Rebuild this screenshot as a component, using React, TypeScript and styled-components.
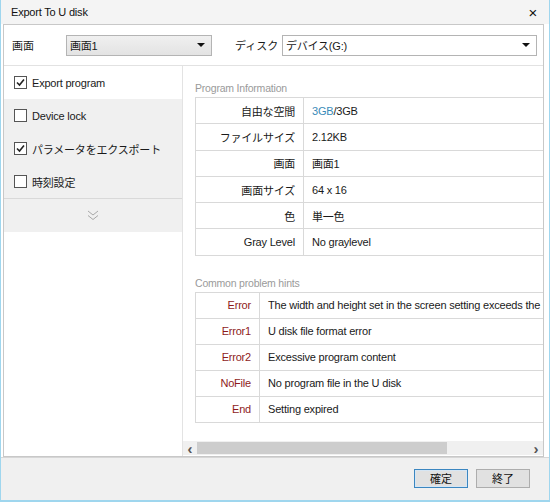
import styled, { createGlobalStyle } from 'styled-components';

const FONT = '"Liberation Sans", "Noto Sans CJK JP", sans-serif';

const GlobalStyle = createGlobalStyle`
  html, body {
    margin: 0;
    padding: 0;
    background: #ffffff;
  }
  body {
    font-family: ${FONT};
    font-size: 11px;
    letter-spacing: -0.2px;
    color: #1a1a1a;
  }
`;

const infoRows = [
  { label: '自由な空間', value: 'free' },
  { label: 'ファイルサイズ', value: '2.12KB' },
  { label: '画面', value: '画面1' },
  { label: '画面サイズ', value: '64 x 16' },
  { label: '色', value: '単一色' },
  { label: 'Gray Level', value: 'No graylevel' },
];

const hintRows = [
  { code: 'Error', text: 'The width and height set in the screen setting exceeds the controller range' },
  { code: 'Error1', text: 'U disk file format error' },
  { code: 'Error2', text: 'Excessive program content' },
  { code: 'NoFile', text: 'No program file in the U disk' },
  { code: 'End', text: 'Setting expired' },
];

const options = [
  { label: 'Export program', checked: true },
  { label: 'Device lock', checked: false },
  { label: 'パラメータをエクスポート', checked: true },
  { label: '時刻設定', checked: false },
];

export default function App() {
  return (
    <>
      <GlobalStyle />
      <Window>
        <TitleBar>
          <span>Export To U disk</span>
          <Close>×</Close>
        </TitleBar>
        <Body>
          <Panel>
            <TopRow>
              <FieldLabel $width={54}>画面</FieldLabel>
              <Combo $width={146} $gray>
                <span>画面1</span>
                <Arrow />
              </Combo>
              <FieldLabel $width={47} $ml={23}>
                ディスク
              </FieldLabel>
              <Combo $width={255}>
                <span>デバイス(G:)</span>
                <Arrow />
              </Combo>
            </TopRow>
            <Main>
              <Sidebar>
                {options.map((o, i) => (
                  <OptionRow key={o.label} $shaded={i > 0}>
                    <CheckBox>
                      {o.checked && (
                        <svg width="9" height="9" viewBox="0 0 9 9">
                          <path d="M1 4.5 L3.5 7 L8 1.5" fill="none" stroke="#222" strokeWidth="1.6" />
                        </svg>
                      )}
                    </CheckBox>
                    <span>{o.label}</span>
                  </OptionRow>
                ))}
                <MoreRow>
                  <svg width="12" height="11" viewBox="0 0 12 11">
                    <path d="M1 1 L6 5 L11 1 M1 5.5 L6 9.5 L11 5.5" fill="none" stroke="#a8a8a8" strokeWidth="1" />
                  </svg>
                </MoreRow>
              </Sidebar>
              <RightPane>
                <Viewport>
                  <Content>
                    <SectionTitle>Program Information</SectionTitle>
                    <Table>
                      <tbody>
                        {infoRows.map((r) => (
                          <Row key={r.label} $h={26.3}>
                            <LabelCell $width={99}>{r.label}</LabelCell>
                            <ValueCell>
                              {r.value === 'free' ? (
                                <>
                                  <Accent>3GB</Accent>/3GB
                                </>
                              ) : (
                                r.value
                              )}
                            </ValueCell>
                          </Row>
                        ))}
                      </tbody>
                    </Table>
                    <SectionTitle $mt={21}>Common problem hints</SectionTitle>
                    <Table>
                      <tbody>
                        {hintRows.map((r) => (
                          <Row key={r.code} $h={26}>
                            <LabelCell $width={55} $red>
                              {r.code}
                            </LabelCell>
                            <ValueCell>{r.text}</ValueCell>
                          </Row>
                        ))}
                      </tbody>
                    </Table>
                  </Content>
                </Viewport>
                <HScroll>
                  <ScrollArrow>‹</ScrollArrow>
                  <Track>
                    <Thumb />
                  </Track>
                  <ScrollArrow>›</ScrollArrow>
                </HScroll>
              </RightPane>
            </Main>
          </Panel>
        </Body>
        <Footer>
          <Button $primary>確定</Button>
          <Button>終了</Button>
        </Footer>
      </Window>
    </>
  );
}

const Window = styled.div`
  width: 550px;
  height: 502px;
  box-sizing: border-box;
  border-left: 1px solid #9fd6ee;
  border-right: 1px solid #9fd6ee;
  border-bottom: 2px solid #9fd6ee;
  background: #f0f0f0;
  display: flex;
  flex-direction: column;
`;

const TitleBar = styled.div`
  height: 24px;
  display: flex;
  align-items: center;
  justify-content: space-between;
  padding: 0 12px 0 10px;
  background: #f4f4f4;
  font-size: 11px;
  color: #111;
`;

const Close = styled.span`
  font-size: 15px;
  line-height: 1;
`;

const Body = styled.div`
  padding: 0 5px 0 2px;
  background: #fff;
  flex: none;
`;

const Panel = styled.div`
  height: 433px;
  box-sizing: border-box;
  border: 1px solid #c8c8c8;
  background: #fff;
  display: flex;
  flex-direction: column;
`;

const TopRow = styled.div`
  height: 41px;
  box-sizing: border-box;
  display: flex;
  align-items: center;
  padding-left: 8px;
  border-bottom: 1px solid #e2e2e2;
`;

const FieldLabel = styled.span<{ $width: number; $ml?: number }>`
  width: ${(p) => p.$width}px;
  flex: none;
  margin-left: ${(p) => p.$ml ?? 0}px;
  white-space: nowrap;
  letter-spacing: 0;
`;

const Combo = styled.div<{ $width: number; $gray?: boolean }>`
  width: ${(p) => p.$width}px;
  flex: none;
  height: 21px;
  box-sizing: border-box;
  border: 1px solid #b4b4b4;
  background: ${(p) => (p.$gray ? 'linear-gradient(#f0f0f0, #e3e3e3)' : '#fff')};
  display: flex;
  align-items: center;
  justify-content: space-between;
  padding: 0 6px 0 3px;
`;

const Arrow = styled.span`
  width: 0;
  height: 0;
  border-left: 4px solid transparent;
  border-right: 4px solid transparent;
  border-top: 4px solid #111;
`;

const Main = styled.div`
  flex: 1;
  display: flex;
  min-height: 0;
`;

const Sidebar = styled.div`
  width: 178px;
  flex: none;
  border-right: 1px solid #e3e3e3;
  background: #fff;
`;

const OptionRow = styled.div<{ $shaded?: boolean }>`
  height: 33px;
  display: flex;
  align-items: center;
  gap: 5px;
  padding-left: 10px;
  background: ${(p) => (p.$shaded ? '#f0f0f0' : '#fff')};
`;

const CheckBox = styled.span`
  width: 11px;
  height: 11px;
  border: 1px solid #555;
  background: #fff;
  display: flex;
  align-items: center;
  justify-content: center;
`;

const MoreRow = styled.div`
  height: 33px;
  border-top: 1px solid #d9d9d9;
  background: #f0f0f0;
  display: flex;
  align-items: center;
  justify-content: center;
`;

const RightPane = styled.div`
  flex: 1;
  min-width: 0;
  display: flex;
  flex-direction: column;
`;

const Viewport = styled.div`
  flex: 1;
  overflow: hidden;
`;

const Content = styled.div`
  width: 580px;
  padding: 16px 0 0 12px;
`;

const SectionTitle = styled.div<{ $mt?: number }>`
  margin-top: ${(p) => p.$mt ?? 0}px;
  margin-bottom: 3px;
  font-size: 10.5px;
  color: #9a9a9a;
`;

const Table = styled.table`
  width: 100%;
  border-collapse: collapse;
  table-layout: fixed;
`;

const Row = styled.tr<{ $h: number }>`
  height: ${(p) => p.$h}px;
`;

const LabelCell = styled.td<{ $width: number; $red?: boolean }>`
  width: ${(p) => p.$width}px;
  border: 1px solid #d9d9d9;
  text-align: right;
  padding: 0 8px 0 0;
  white-space: nowrap;
  color: ${(p) => (p.$red ? '#8e1b1b' : '#1a1a1a')};
`;

const ValueCell = styled.td`
  border: 1px solid #d9d9d9;
  padding: 0 0 0 8px;
  white-space: nowrap;
  overflow: hidden;
`;

const Accent = styled.span`
  color: #3a8bb8;
`;

const HScroll = styled.div`
  height: 14px;
  display: flex;
  align-items: stretch;
  background: #f0f0f0;
  margin-bottom: 1px;
`;

const ScrollArrow = styled.span`
  width: 14px;
  display: flex;
  align-items: center;
  justify-content: center;
  font-size: 15px;
  font-weight: bold;
  color: #555;
  line-height: 1;
`;

const Track = styled.div`
  flex: 1;
  display: flex;
  padding: 1px 0;
`;

const Thumb = styled.div`
  width: 250px;
  background: #cdcdcd;
`;

const Footer = styled.div`
  flex: 1;
  display: flex;
  justify-content: flex-end;
  align-items: center;
  gap: 8px;
  padding: 0 19px 2px 0;
  border-top: 1px solid #d6d6d6;
  background: #f0f0f0;
`;

const Button = styled.button<{ $primary?: boolean }>`
  width: 54px;
  height: 19px;
  box-sizing: border-box;
  padding: 0;
  font-family: ${FONT};
  font-size: 11px;
  color: #111;
  background: #e1e1e1;
  border: 1px solid ${(p) => (p.$primary ? '#3b86c0' : '#adadad')};
  box-shadow: ${(p) => (p.$primary ? 'inset 0 0 0 1px #d6e6f4' : 'none')};
`;
